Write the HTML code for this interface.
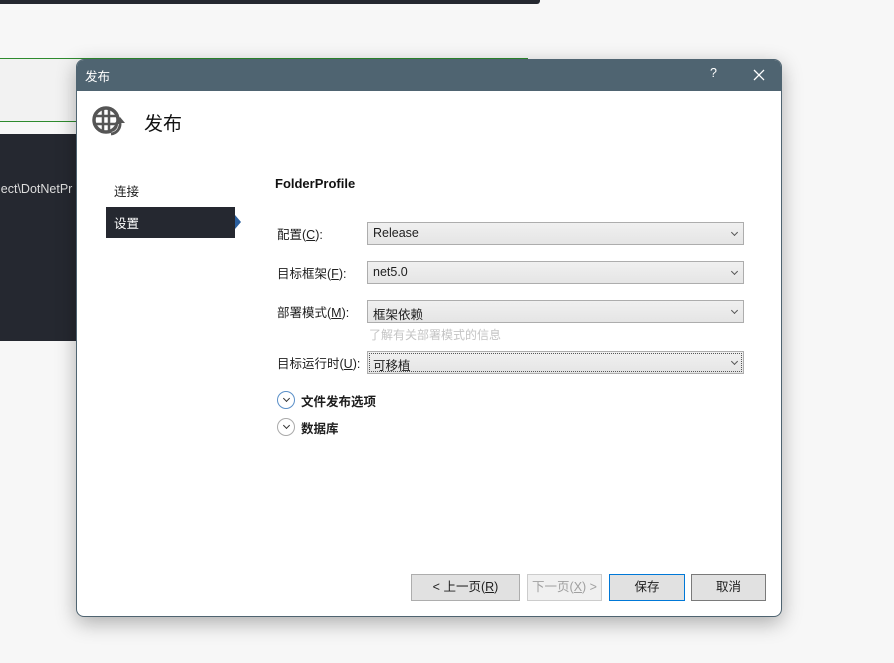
<!DOCTYPE html>
<html><head><meta charset="utf-8"><style>
*{box-sizing:border-box;margin:0;padding:0}
body{width:894px;height:663px;background:#f7f7f7;position:relative;overflow:hidden;font-family:"Liberation Sans","Noto Sans CJK SC",sans-serif;font-size:12px;color:#1e1e1e}
.abs{position:absolute}
.dd{position:absolute;left:367px;width:377px;height:23px;border:1px solid #adadad;background:linear-gradient(#f0f0f0,#e5e5e5);padding:3px 5px;font-size:12.5px}
.dd::after{content:"";position:absolute;right:6px;top:7px;width:4px;height:4px;border-right:1px solid #555;border-bottom:1px solid #555;transform:rotate(45deg)}
.lbl{position:absolute;left:277px;font-size:12.5px}
.btn{position:absolute;top:574px;height:27px;border:1px solid #adadad;background:#e1e1e1;text-align:center;line-height:25px;font-size:12.5px}
.circ{position:absolute;left:277px;width:18px;height:18px;border-radius:50%;border:1px solid #5a8fc8}
.circ::after{content:"";position:absolute;left:6px;top:4px;width:4px;height:4px;border-right:1.5px solid #333;border-bottom:1.5px solid #333;transform:rotate(45deg)}
</style></head><body>
<div class="abs" style="left:0;top:0;width:540px;height:4px;background:#252830;border-radius:0 0 3px 0"></div>
<div class="abs" style="left:0;top:58px;width:528px;height:1px;background:#2e8b2e"></div>
<div class="abs" style="left:0;top:59px;width:80px;height:62px;background:#f2f2f2"></div>
<div class="abs" style="left:0;top:121px;width:80px;height:1px;background:#2e8b2e"></div>
<div class="abs" style="left:0;top:134px;width:80px;height:207px;background:#252830;color:#ddd;font-size:12.5px;padding-top:48px;white-space:nowrap;overflow:hidden"><span style="margin-left:-2px">ject\DotNetPr</span></div>
<div class="abs" style="left:76px;top:59px;width:706px;height:558px;background:#fff;border:1px solid #4f6471;border-radius:8px;overflow:hidden;box-shadow:0 6px 20px rgba(0,0,0,.3)">
 <div style="height:31px;background:#4f6471;color:#fff;font-size:12.5px;padding:6px 8px;position:relative">发布
  <span style="position:absolute;left:633px;top:6px">?</span>
  <svg style="position:absolute;left:676px;top:9px" width="12" height="12" viewBox="0 0 12 12"><path d="M1 1L11 11M11 1L1 11" stroke="#fff" stroke-width="1.3"/></svg></div>
 <svg class="abs" style="left:15px;top:45px" width="34" height="34" viewBox="0 0 34 34"><circle cx="14" cy="15" r="12" fill="none" stroke="#555" stroke-width="3.5"/><path d="M3 11h22M3 19h22M11 4v22M17 4v22" stroke="#555" stroke-width="2.5"/><path d="M20 30a11 11 0 0 0 9-11" stroke="#fff" stroke-width="6" fill="none"/><path d="M19 29a10 10 0 0 0 9-11" stroke="#555" stroke-width="2.8" fill="none"/><path d="M23 18l5-6 5 6z" fill="#555"/></svg>
 <div class="abs" style="left:67px;top:49px;font-size:19px;color:#111">发布</div>
 <div class="abs" style="left:37px;top:121px;font-size:12.5px">连接</div>
 <div class="abs" style="left:29px;top:147px;width:129px;height:31px;background:#252830;color:#fff;padding:6px 8px;font-size:12.5px">设置</div>
 <div class="abs" style="left:158px;top:155px;width:0;height:0;border-left:6px solid #2b5f9e;border-top:7px solid transparent;border-bottom:7px solid transparent"></div>
 <div class="abs" style="left:198px;top:116px;font-weight:bold;font-size:13px;color:#111">FolderProfile</div>
</div>
<div class="lbl" style="top:224px">配置(<u>C</u>):</div><div class="dd" style="top:222px">Release</div>
<div class="lbl" style="top:263px">目标框架(<u>F</u>):</div><div class="dd" style="top:261px">net5.0</div>
<div class="lbl" style="top:302px">部署模式(<u>M</u>):</div><div class="dd" style="top:300px">框架依赖</div>
<div class="abs" style="left:369px;top:326px;color:#c4c4c4;font-size:12px">了解有关部署模式的信息</div>
<div class="lbl" style="top:353px">目标运行时(<u>U</u>):</div><div class="dd" style="top:351px;outline:1px dotted #555;outline-offset:-3px">可移植</div>
<div class="circ" style="top:391px"></div><div class="abs" style="left:301px;top:391px;font-weight:bold;font-size:12.5px">文件发布选项</div>
<div class="circ" style="top:418px;border-color:#aaa"></div><div class="abs" style="left:301px;top:418px;font-weight:bold;font-size:12.5px">数据库</div>
<div class="btn" style="left:411px;width:109px">&lt; 上一页(<u>R</u>)</div>
<div class="btn" style="left:527px;width:75px;color:#a0a0a0;border-color:#ccc;background:#f0f0f0">下一页(<u>X</u>) &gt;</div>
<div class="btn" style="left:609px;width:76px;border-color:#0078d7">保存</div>
<div class="btn" style="left:691px;width:75px;border-color:#7a7a7a">取消</div>
</body></html>
